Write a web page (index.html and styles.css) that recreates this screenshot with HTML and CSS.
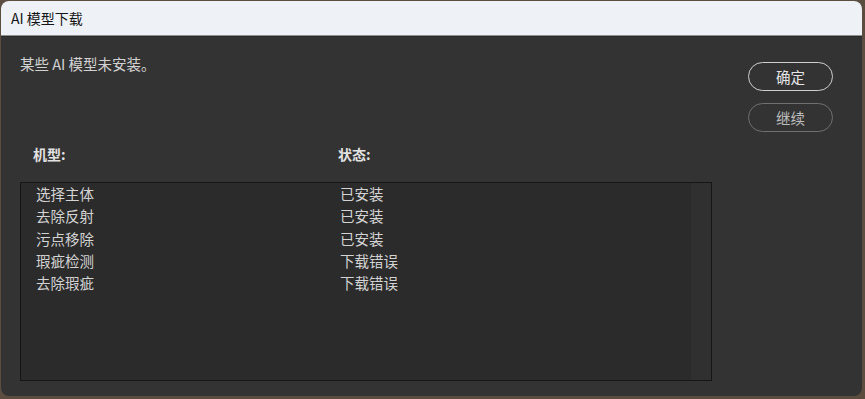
FILE: index.html
```html
<!DOCTYPE html>
<html lang="zh">
<head>
<meta charset="utf-8">
<link rel="stylesheet" href="styles.css">
</head>
<body>
<div class="window">
  <div class="titlebar">AI 模型下载</div>
  <div class="content">
    <div class="main">
      <div class="message">某些 AI 模型未安装。</div>
      <div class="headers">
        <div class="col-name">机型:</div>
        <div class="col-status">状态:</div>
      </div>
      <div class="listbox">
        <div class="rows">
          <div class="row"><div class="col-name">选择主体</div><div class="col-status">已安装</div></div>
          <div class="row"><div class="col-name">去除反射</div><div class="col-status">已安装</div></div>
          <div class="row"><div class="col-name">污点移除</div><div class="col-status">已安装</div></div>
          <div class="row"><div class="col-name">瑕疵检测</div><div class="col-status">下载错误</div></div>
          <div class="row"><div class="col-name">去除瑕疵</div><div class="col-status">下载错误</div></div>
        </div>
        <div class="track"></div>
      </div>
    </div>
    <div class="buttons">
      <button class="btn primary">确定</button>
      <button class="btn secondary">继续</button>
    </div>
  </div>
</div>
</body>
</html>
```
FILE: styles.css
```css
html, body {
  margin: 0;
  padding: 0;
}
body {
  width: 865px;
  height: 399px;
  background: #5b4e40;
  font-family: "Noto Sans CJK SC", "Noto Sans", sans-serif;
  overflow: hidden;
}
.window {
  margin: 1px 0 0 1px;
  width: 861px;
  height: 395px;
  border-radius: 8px;
  overflow: hidden;
  background: #333333;
  display: flex;
  flex-direction: column;
}
.titlebar {
  flex: none;
  background: #eef2f7;
  border-bottom: 1px solid #8f8f8f;
  color: #151515;
  font-size: 14px;
  line-height: 34px;
  padding-left: 10px;
  box-sizing: border-box;
  height: 35px;
}
.content {
  flex: 1;
  display: flex;
  border-top: 1px solid #2a2a2a;
}
.main {
  flex: 1;
  display: flex;
  flex-direction: column;
  padding-left: 19px;
}
.message {
  margin-top: 17px;
  font-size: 14.5px;
  line-height: 20px;
  color: #d2d2d2;
}
.headers {
  display: flex;
  margin-top: 70px;
  padding-left: 13px;
  font-size: 14px;
  font-weight: bold;
  line-height: 20px;
  color: #e2e2e2;
}
.headers .col-name {
  width: 305px;
}
.listbox {
  margin-top: 18px;
  width: 692px;
  height: 199px;
  box-sizing: border-box;
  border: 1px solid #161616;
  background: #2b2b2b;
  display: flex;
}
.rows {
  flex: 1;
  padding-top: 0;
  padding-left: 15px;
}
.row {
  display: flex;
  font-size: 14.5px;
  line-height: 22.3px;
  color: #d4d4d4;
}
.row .col-name {
  width: 304px;
}
.track {
  width: 20px;
  background: #303030;
}
.buttons {
  width: 114px;
  display: flex;
  flex-direction: column;
  gap: 12px;
  padding-top: 25px;
}
.btn {
  width: 85px;
  height: 29px;
  border-radius: 15px;
  background: transparent;
  font-family: "Noto Sans CJK SC", sans-serif;
  font-size: 14.5px;
  padding: 0;
  line-height: 26px;
}
.primary {
  border: 1.5px solid #cfcfcf;
  color: #e6e6e6;
}
.secondary {
  border: 1.5px solid #707070;
  color: #bdbdbd;
}
```
